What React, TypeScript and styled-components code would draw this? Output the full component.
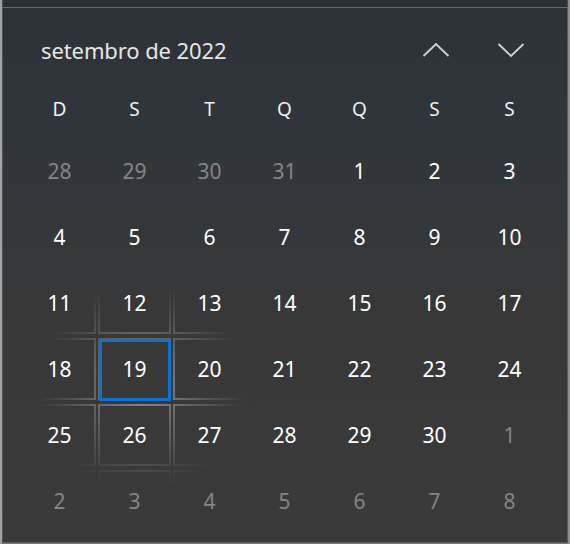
import React from "react";
import styled, { createGlobalStyle } from "styled-components";

const Global = createGlobalStyle`
  html, body { margin: 0; padding: 0; background: #8c8c8c; }
  body { width: 570px; height: 544px; overflow: hidden; font-family: "Noto Sans", "Open Sans", sans-serif; }
`;

const Frame = styled.div`
  box-sizing: border-box;
  width: 570px;
  height: 544px;
  display: flex;
  flex-direction: column;
  background: #2b3137;
  border-left: 2px solid #a3a3a3;
  border-right: 2px solid #8e8e8e;
  border-bottom: 1px solid #7a7a7a;
`;

const TopStrip = styled.div`
  height: 7px;
  flex: none;
  background: #2a3036;
  border-bottom: 1px solid #646b71;
  border-left: 1px solid #4a4f54;
  border-right: 1px solid #4a4f54;
`;

const Panel = styled.div`
  flex: 1;
  display: flex;
  flex-direction: column;
  padding: 0 19px 0 19px;
  border-left: 1px solid #4c5055;
  border-right: 1px solid #5c5c5c;
  border-bottom: 1px solid #5a5a5a;
  background: linear-gradient(180deg, #2c3238 0%, #2f353b 18%, #34373a 38%, #383838 60%, #3a3a3a 100%);
`;

const Header = styled.div`
  height: 72px;
  padding-top: 12px;
  box-sizing: border-box;
  display: flex;
  align-items: center;
`;

const MonthTitle = styled.div`
  flex: 1;
  padding-left: 19px;
  font-size: 22px;
  color: #e6e6e6;
  letter-spacing: -0.1px;
`;

const NavButton = styled.div`
  width: 75px;
  height: 60px;
  display: flex;
  align-items: center;
  justify-content: center;
  color: #d4d4d4;
`;

const WeekRow = styled.div`
  display: grid;
  grid-template-columns: repeat(7, 75px);
  height: 58px;
`;

const WeekDay = styled.div`
  display: flex;
  align-items: center;
  justify-content: center;
  font-size: 19px;
  color: #f0f0f0;
`;

const Grid = styled.div`
  display: grid;
  grid-template-columns: repeat(7, 75px);
  grid-auto-rows: 66px;
`;

const DayCell = styled.div<{ $muted?: boolean; $selected?: boolean }>`
  position: relative;
  display: flex;
  align-items: center;
  justify-content: center;
  font-size: 21px;
  color: ${(p) => (p.$muted ? "#858585" : "#ffffff")};

  &::before {
    content: "";
    position: absolute;
    left: 1px;
    right: 1px;
    top: 2px;
    bottom: 2px;
    padding: 2px;
    background: radial-gradient(circle 104px at 142px 386px, rgba(255, 255, 255, 0.45) 0%, rgba(255, 255, 255, 0.22) 48%, rgba(255, 255, 255, 0) 100%) fixed;
    -webkit-mask: linear-gradient(#000 0 0) content-box, linear-gradient(#000 0 0);
    -webkit-mask-composite: xor;
    mask: linear-gradient(#000 0 0) content-box exclude, linear-gradient(#000 0 0);
    pointer-events: none;
  }

  ${(p) =>
    p.$selected &&
    `
    &::after {
      content: "";
      position: absolute;
      left: 2px;
      right: 1px;
      top: 3px;
      bottom: 1px;
      border: 3px solid #0a72d2;
    }
  `}
`;

const Chevron = ({ up }: { up?: boolean }) => (
  <svg width="28" height="16" viewBox="0 0 28 16" fill="none">
    <path
      d={up ? "M1.5 14 L14 2 L26.5 14" : "M1.5 2 L14 14 L26.5 2"}
      stroke="currentColor"
      strokeWidth="1.8"
    />
  </svg>
);

type Day = { n: number; muted?: boolean; selected?: boolean };

const days: Day[] = [
  ...[28, 29, 30, 31].map((n) => ({ n, muted: true })),
  ...Array.from({ length: 30 }, (_, i) => ({ n: i + 1, selected: i + 1 === 19 })),
  ...[1, 2, 3, 4, 5, 6, 7, 8].map((n) => ({ n, muted: true })),
];

const weekDays = ["D", "S", "T", "Q", "Q", "S", "S"];

export default function App() {
  return (
    <>
      <Global />
      <Frame>
        <TopStrip />
        <Panel>
          <Header>
            <MonthTitle>setembro de 2022</MonthTitle>
            <NavButton>
              <Chevron up />
            </NavButton>
            <NavButton>
              <Chevron />
            </NavButton>
          </Header>
          <WeekRow>
            {weekDays.map((d, i) => (
              <WeekDay key={i}>{d}</WeekDay>
            ))}
          </WeekRow>
          <Grid>
            {days.map((d, i) => (
              <DayCell key={i} $muted={d.muted} $selected={d.selected}>
                {d.n}
              </DayCell>
            ))}
          </Grid>
        </Panel>
      </Frame>
    </>
  );
}
